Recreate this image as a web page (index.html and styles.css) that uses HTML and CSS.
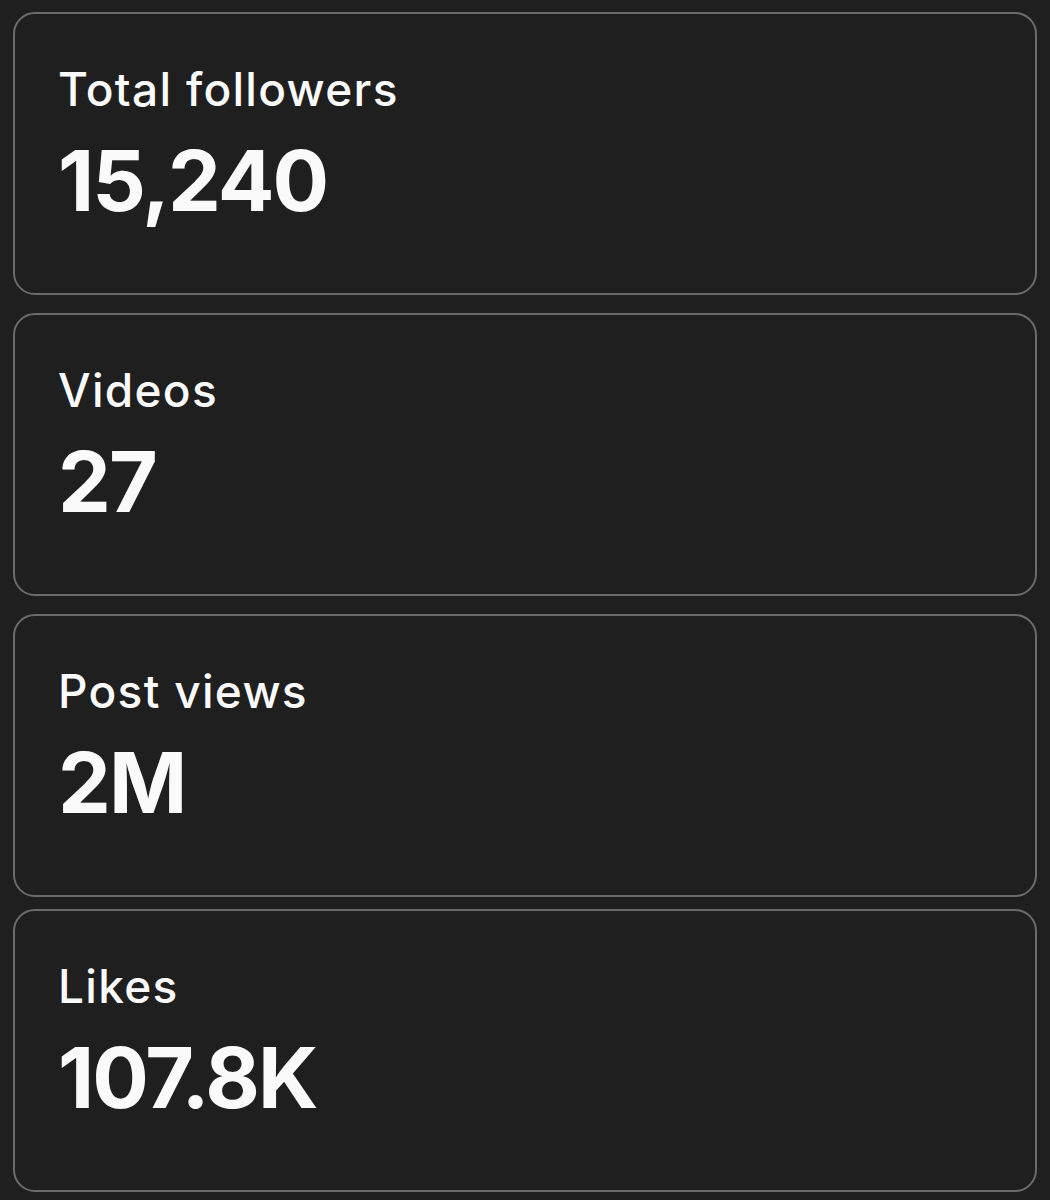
FILE: index.html
```html
<!doctype html>
<html lang="en">
    <head>
        <meta charset="UTF-8" />
        <meta name="viewport" content="width=device-width, initial-scale=1.0" />
        <title>Stats</title>
        <link rel="stylesheet" href="styles.css">
    </head>
    <body>
        <div class="stats">
            <div class="card">
                <div class="label">Total followers</div>
                <div class="value">15,240</div>
            </div>
            <div class="card">
                <div class="label">Videos</div>
                <div class="value">27</div>
            </div>
            <div class="card">
                <div class="label">Post views</div>
                <div class="value">2M</div>
            </div>
            <div class="card last">
                <div class="label">Likes</div>
                <div class="value">107.8K</div>
            </div>
        </div>
    </body>
</html>
```

FILE: styles.css
```css
body {
    margin: 0;
    background-color: #1f1f1f;
    color: #fafafa;
    font-family: Inter, "Noto Sans", sans-serif;
}

.stats {
    display: flex;
    flex-direction: column;
    gap: 18px;
    padding: 12px 13px 0 13px;
}

.card {
    box-sizing: border-box;
    height: 283px;
    border: 2px solid #6b6b6b;
    border-radius: 22px;
    padding: 47px 43px 0 43px;
}

.card.last {
    margin-top: -6px;
}

.label {
    font-size: 46px;
    line-height: 56px;
    font-weight: 500;
    letter-spacing: 1.3px;
}

.value {
    margin-top: 14px;
    font-size: 84px;
    line-height: 100px;
    font-weight: 700;
    letter-spacing: -2px;
}
```
